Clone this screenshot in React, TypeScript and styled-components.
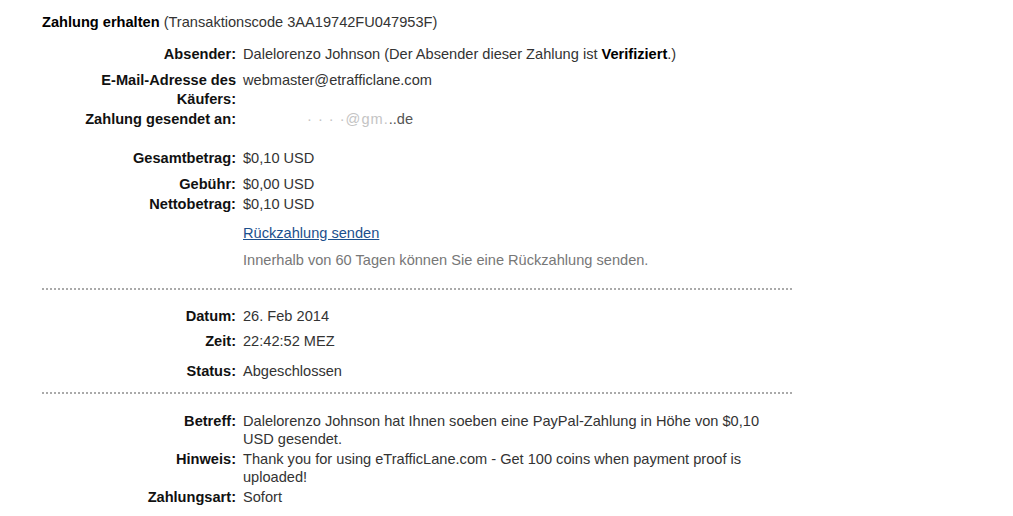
import React from "react";
import styled, { createGlobalStyle } from "styled-components";

const Global = createGlobalStyle`
  html, body { margin: 0; padding: 0; background: #fff; }
  body { font-family: "Liberation Sans", Arial, sans-serif; font-size: 14.6px; color: #333; }
`;

const Page = styled.div`
  padding: 13px 0 0 42px;
  width: 750px;
  line-height: 18px;
`;

const Title = styled.div`
  color: #000;
  line-height: 18px;
`;

const Strong = styled.strong`
  font-weight: bold;
  color: #000;
`;

const Code = styled.span`
  color: #333;
`;

const Row = styled.div<{ $mt: number }>`
  display: grid;
  grid-template-columns: 194px 525px;
  column-gap: 7px;
  margin-top: ${(p) => p.$mt}px;
  line-height: 18px;
`;

const Label = styled.div<{ $lh?: number }>`
  text-align: right;
  font-weight: bold;
  color: #111;
  padding-left: 30px;
  line-height: ${(p) => p.$lh ?? 18}px;
`;

const Value = styled.div<{ $lh?: number }>`
  color: #333;
  line-height: ${(p) => p.$lh ?? 18}px;
`;

const Link = styled.a`
  color: #1b4f8d;
  text-decoration: underline;
  cursor: pointer;
`;

const Note = styled.div`
  color: #777;
`;

const Divider = styled.div<{ $mt: number }>`
  margin-top: ${(p) => p.$mt}px;
  height: 2px;
  width: 750px;
  background: repeating-linear-gradient(to right, #aaa 0 2px, transparent 2px 4px);
`;

const Redacted = styled.span`
  padding-left: 64px;
  color: #c4c4c4;
  letter-spacing: 1px;
`;

const RedactedEnd = styled.span`
  color: #555;
`;

export default function App() {
  return (
    <>
      <Global />
      <Page>
        <Title>
          <Strong>Zahlung erhalten</Strong> <Code>(Transaktionscode 3AA19742FU047953F)</Code>
        </Title>

        <Row $mt={14}>
          <Label>Absender:</Label>
          <Value>
            Dalelorenzo Johnson (Der Absender dieser Zahlung ist <Strong>Verifiziert</Strong>.)
          </Value>
        </Row>
        <Row $mt={8}>
          <Label $lh={19}>E-Mail-Adresse des Käufers:</Label>
          <Value $lh={19}>webmaster@etrafficlane.com</Value>
        </Row>
        <Row $mt={1}>
          <Label>Zahlung gesendet an:</Label>
          <Value>
            <Redacted>· · · ·@gm.</Redacted>
            <RedactedEnd>..de</RedactedEnd>
          </Value>
        </Row>

        <Row $mt={21}>
          <Label>Gesamtbetrag:</Label>
          <Value>$0,10 USD</Value>
        </Row>
        <Row $mt={8}>
          <Label>Gebühr:</Label>
          <Value>$0,00 USD</Value>
        </Row>
        <Row $mt={2}>
          <Label>Nettobetrag:</Label>
          <Value>$0,10 USD</Value>
        </Row>
        <Row $mt={11}>
          <Label />
          <Value>
            <Link>Rückzahlung senden</Link>
          </Value>
        </Row>
        <Row $mt={9}>
          <Label />
          <Note>Innerhalb von 60 Tagen können Sie eine Rückzahlung senden.</Note>
        </Row>

        <Divider $mt={19} />

        <Row $mt={17}>
          <Label>Datum:</Label>
          <Value>26. Feb 2014</Value>
        </Row>
        <Row $mt={7}>
          <Label>Zeit:</Label>
          <Value>22:42:52 MEZ</Value>
        </Row>
        <Row $mt={12}>
          <Label>Status:</Label>
          <Value>Abgeschlossen</Value>
        </Row>

        <Divider $mt={12} />

        <Row $mt={18}>
          <Label>Betreff:</Label>
          <Value>Dalelorenzo Johnson hat Ihnen soeben eine PayPal-Zahlung in Höhe von $0,10 USD gesendet.</Value>
        </Row>
        <Row $mt={2}>
          <Label>Hinweis:</Label>
          <Value>Thank you for using eTrafficLane.com - Get 100 coins when payment proof is uploaded!</Value>
        </Row>
        <Row $mt={2}>
          <Label>Zahlungsart:</Label>
          <Value>Sofort</Value>
        </Row>
      </Page>
    </>
  );
}
